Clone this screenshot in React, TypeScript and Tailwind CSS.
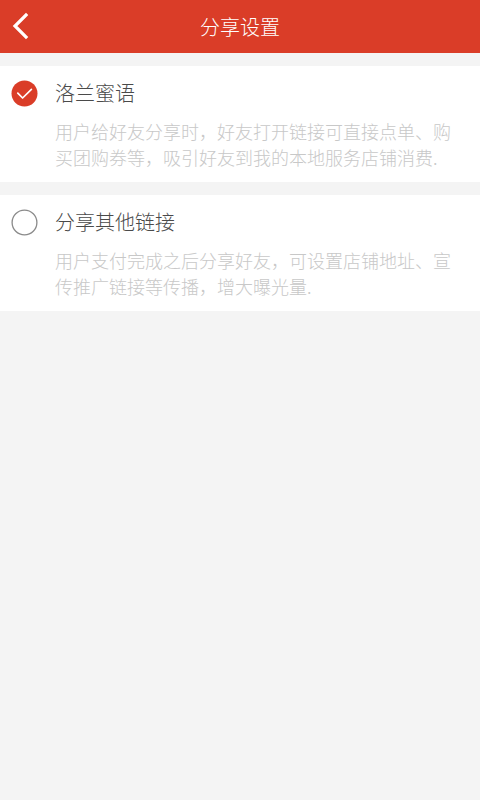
import { useState } from 'react';

const OPTIONS = [
    {
        key: 'brand',
        title: '洛兰蜜语',
        desc: '用户给好友分享时，好友打开链接可直接点单、购买团购券等，吸引好友到我的本地服务店铺消费.',
    },
    {
        key: 'other',
        title: '分享其他链接',
        desc: '用户支付完成之后分享好友，可设置店铺地址、宣传推广链接等传播，增大曝光量.',
    },
];

function Radio({ checked }: { checked: boolean }) {
    if (checked) {
        return (
            <svg width="27" height="27" viewBox="0 0 27 27" className="shrink-0">
                <circle cx="13.5" cy="13.5" r="13" fill="#da3d28" />
                <path d="M6.8 13.2 L11.6 18 L20.4 9.4" fill="none" stroke="#fff" strokeWidth="1.7" strokeLinecap="round" strokeLinejoin="round" />
            </svg>
        );
    }
    return (
        <svg width="27" height="27" viewBox="0 0 27 27" className="shrink-0">
            <circle cx="13.5" cy="13.5" r="12.4" fill="none" stroke="#8a8a8a" strokeWidth="1.3" />
        </svg>
    );
}

export default function App() {
    const [selected, setSelected] = useState('brand');

    return (
        <div className="min-h-[800px] bg-[#f4f4f4]" style={{ fontFamily: '"Noto Sans CJK SC", "Noto Sans", sans-serif' }}>
            {/* Header */}
            <div className="relative flex h-[53px] items-center justify-center bg-[#da3d28]">
                <button className="absolute left-[11px] top-[12px]">
                    <svg width="20" height="28" viewBox="0 0 20 28">
                        <path d="M15 3 L4 14 L15 25" fill="none" stroke="#fff" strokeWidth="3.2" strokeLinecap="square" strokeLinejoin="miter" />
                    </svg>
                </button>
                <span className="text-[20px] font-light leading-none text-white">分享设置</span>
            </div>

            {/* Options */}
            <div className="flex flex-col gap-[13px] pt-[13px]">
                {OPTIONS.map((o) => (
                    <div
                        key={o.key}
                        onClick={() => setSelected(o.key)}
                        className="bg-white pb-[12px] pl-[11px] pr-[24px] pt-[13px]"
                    >
                        <div className="flex h-[28px] items-center gap-[17px]">
                            <Radio checked={selected === o.key} />
                            <span className="text-[20px] font-light leading-none text-[#4a4a4a]">{o.title}</span>
                        </div>
                        <p className="mt-[11px] pl-[44px] text-[18px] font-light leading-[26px] text-[#c8c8c8]">{o.desc}</p>
                    </div>
                ))}
            </div>
        </div>
    );
}
